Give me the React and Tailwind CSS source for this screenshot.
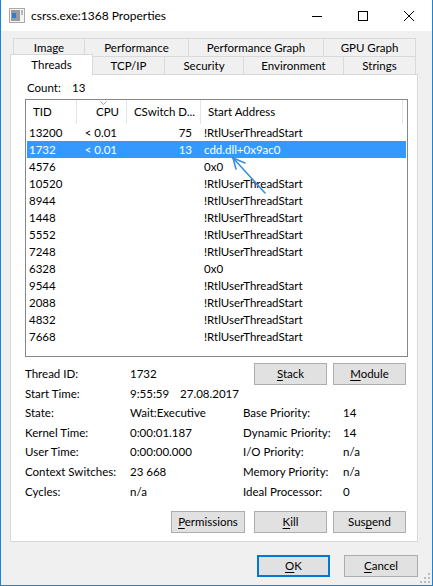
import React from 'react';

const font = { fontFamily: 'Lato, "Liberation Sans", sans-serif' };

const topTabs = [
  { label: 'Image', w: 'w-[71px]' },
  { label: 'Performance', w: 'w-[104px]' },
  { label: 'Performance Graph', w: 'w-[135px]' },
  { label: 'GPU Graph', w: 'w-[93px] border-r' },
];

const lowTabs = [
  { label: 'TCP/IP', w: 'w-[72px]' },
  { label: 'Security', w: 'w-[79px]' },
  { label: 'Environment', w: 'w-[100px]' },
  { label: 'Strings', w: 'w-[72px]' },
];

const threads = [
  { tid: '13200', cpu: '< 0.01', cs: '75', addr: '!RtlUserThreadStart' },
  { tid: '1732', cpu: '< 0.01', cs: '13', addr: 'cdd.dll+0x9ac0', selected: true },
  { tid: '4576', addr: '0x0' },
  { tid: '10520', addr: '!RtlUserThreadStart' },
  { tid: '8944', addr: '!RtlUserThreadStart' },
  { tid: '1448', addr: '!RtlUserThreadStart' },
  { tid: '5552', addr: '!RtlUserThreadStart' },
  { tid: '7248', addr: '!RtlUserThreadStart' },
  { tid: '6328', addr: '0x0' },
  { tid: '9544', addr: '!RtlUserThreadStart' },
  { tid: '2088', addr: '!RtlUserThreadStart' },
  { tid: '4832', addr: '!RtlUserThreadStart' },
  { tid: '7668', addr: '!RtlUserThreadStart' },
];

const details = [
  { h: 'h-[18px]', label: 'Start Time:', value: <span>9:55:59<span className="ml-[11px]">27.08.2017</span></span> },
  { h: 'h-[20px]', label: 'State:', value: 'Wait:Executive', rl: 'Base Priority:', rv: '14' },
  { h: 'h-[19px]', label: 'Kernel Time:', value: '0:00:01.187', rl: 'Dynamic Priority:', rv: '14' },
  { h: 'h-[20px]', label: 'User Time:', value: '0:00:00.000', rl: 'I/O Priority:', rv: 'n/a' },
  { h: 'h-[19px]', label: 'Context Switches:', value: '23 668', rl: 'Memory Priority:', rv: 'n/a' },
  { h: 'h-[21px]', label: 'Cycles:', value: 'n/a', rl: 'Ideal Processor:', rv: '0' },
];

const Btn = ({ w, pre = '', u, post = '', def }) => (
  <div
    className={`${w} h-[22px] flex items-center justify-center bg-[#e1e1e1] ${
      def ? 'border-2 border-[#0078d7]' : 'border border-[#adadad]'
    }`}
  >
    <span>
      {pre}
      <span className="underline underline-offset-2">{u}</span>
      {post}
    </span>
  </div>
);

const TitleIcon = () => (
  <svg width="16" height="15" viewBox="0 0 16 15">
    <rect x="0.5" y="0.5" width="15" height="14" fill="#f4f4f4" stroke="#a9a9a9" />
    <rect x="2" y="2" width="9" height="11" fill="#9a9a9a" />
    <rect x="3" y="5" width="4" height="5" fill="#2f7fd0" />
    <rect x="12" y="2" width="2" height="5" fill="#b8b8b8" />
  </svg>
);

export default function App() {
  return (
    <div
      style={font}
      className="w-[433px] h-[586px] bg-[#f0f0f0] border-x border-b border-[#1883d7] text-[11.5px] text-black flex flex-col relative"
    >
      {/* title bar */}
      <div className="h-[31px] bg-white flex items-center shrink-0 text-[12px]">
        <div className="pl-[8px] pr-[6px] flex items-center">
          <TitleIcon />
        </div>
        <span className="flex-1">csrss.exe:1368 Properties</span>
        <div className="flex h-full">
          <div className="w-[46px] flex items-center justify-center">
            <svg width="10" height="10" viewBox="0 0 10 10">
              <path d="M0 5.5h10" stroke="#000" strokeWidth="1" />
            </svg>
          </div>
          <div className="w-[46px] flex items-center justify-center">
            <svg width="10" height="10" viewBox="0 0 10 10">
              <rect x="0.5" y="0.5" width="9" height="9" fill="none" stroke="#000" />
            </svg>
          </div>
          <div className="w-[46px] flex items-center justify-center">
            <svg width="10" height="10" viewBox="0 0 10 10">
              <path d="M0 0L10 10M10 0L0 10" stroke="#000" strokeWidth="1" />
            </svg>
          </div>
        </div>
      </div>

      {/* tabs + panel */}
      <div className="ml-[9px] w-[408px] mt-[7px]">
        <div className="flex ml-[3px] h-[18px]">
          {topTabs.map((t) => (
            <div
              key={t.label}
              className={`${t.w} h-full border-t border-l border-[#d9d9d9] flex items-center justify-center`}
            >
              {t.label}
            </div>
          ))}
        </div>
        <div className="flex h-[18px]">
          <div className="w-[83px] h-[21px] -mt-[2px] bg-white border-t border-x border-[#d9d9d9] relative z-10 flex items-start justify-center pt-[1px]">
            Threads
          </div>
          {lowTabs.map((t) => (
            <div
              key={t.label}
              className={`${t.w} h-full border-t border-r border-[#d9d9d9] flex items-center justify-center pt-px`}
            >
              {t.label}
            </div>
          ))}
        </div>

        <div className="h-[468px] bg-white border border-[#d9d9d9] flex flex-col">
          <div className="h-[16px] mt-[5px] flex items-center pl-[16px]">
            <span className="w-[45px]">Count:</span>
            <span>13</span>
          </div>

          {/* thread list */}
          <div className="mt-[3px] ml-[14px] w-[383px] h-[258px] border border-[#828790] relative">
            <div className="h-[24px] flex">
              <div className="w-[51px] border-r border-[#e5e5e5] flex items-center pl-[7px]">TID</div>
              <div className="w-[50px] border-r border-[#e5e5e5] flex items-center justify-end pr-[7px] relative">
                <svg className="absolute left-[23px] top-[1px]" width="7" height="4" viewBox="0 0 7 4">
                  <path d="M0.5 0.5L3.5 3.5L6.5 0.5" fill="none" stroke="#a0a0a0" />
                </svg>
                CPU
              </div>
              <div className="w-[74px] border-r border-[#e5e5e5] flex items-center justify-end pr-[5px]">CSwitch D...</div>
              <div className="w-[202px] border-r border-[#e5e5e5] flex items-center pl-[7px]">Start Address</div>
            </div>
            {threads.map((r) => (
              <div
                key={r.tid}
                className={`h-[17px] mx-px flex items-center ${r.selected ? 'bg-[#3399ff] text-white' : ''}`}
              >
                <div className="w-[50px] pl-[2px]">{r.tid}</div>
                <div className="w-[50px] text-right pr-[10px]">{r.cpu}</div>
                <div className="w-[74px] text-right pr-[9px]">{r.cs}</div>
                <div className="pl-[3px]">{r.addr}</div>
              </div>
            ))}
            <svg className="absolute left-[200px] top-[51px]" width="50" height="45" viewBox="0 0 50 45">
              <g stroke="#3a8ee0" strokeWidth="1.6" fill="none" strokeLinecap="round">
                <path d="M7 7L39 42" />
                <path d="M7 7L19 12" />
                <path d="M7 7L10 18" />
              </g>
            </svg>
          </div>

          {/* details */}
          <div className="pl-[14px] mt-[6px]">
            <div className="h-[22px] flex items-center">
              <span className="w-[105px]">Thread ID:</span>
              <span className="w-[124px]">1732</span>
              <Btn w="w-[73px]" u="S" post="tack" />
              <div className="w-[6px]" />
              <Btn w="w-[73px]" u="M" post="odule" />
            </div>
            {details.map((d) => (
              <div key={d.label} className={`${d.h} flex items-center`}>
                <span className="w-[105px]">{d.label}</span>
                <span className="w-[113px]">{d.value}</span>
                <span className="w-[100px]">{d.rl}</span>
                <span>{d.rv}</span>
              </div>
            ))}
            <div className="mt-[9px] flex items-center">
              <div className="w-[146px]" />
              <Btn w="w-[74px]" u="P" post="ermissions" />
              <div className="w-[9px]" />
              <Btn w="w-[73px]" u="K" post="ill" />
              <div className="w-[6px]" />
              <Btn w="w-[73px]" pre="Sus" u="p" post="end" />
            </div>
          </div>
        </div>
      </div>

      {/* dialog buttons */}
      <div className="mt-[13px] flex pl-[256px]">
        <Btn w="w-[73px]" u="O" post="K" def />
        <div className="w-[14px]" />
        <Btn w="w-[74px]" u="C" post="ancel" />
      </div>

      <svg className="absolute right-[2px] bottom-[2px]" width="10" height="10" viewBox="0 0 10 10">
        <g fill="#bdbdbd">
          <rect x="8" y="0" width="2" height="2" />
          <rect x="4" y="4" width="2" height="2" />
          <rect x="8" y="4" width="2" height="2" />
          <rect x="0" y="8" width="2" height="2" />
          <rect x="4" y="8" width="2" height="2" />
          <rect x="8" y="8" width="2" height="2" />
        </g>
      </svg>
    </div>
  );
}
